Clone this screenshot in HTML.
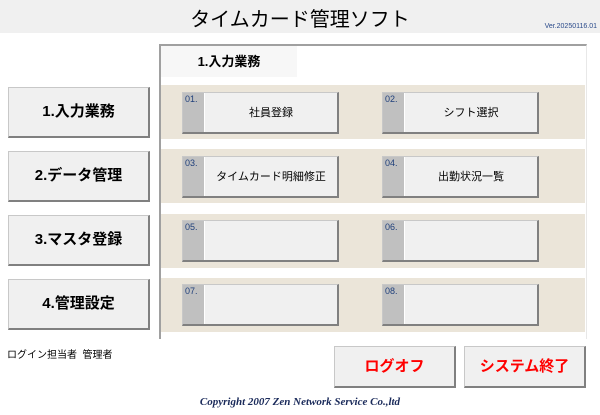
<!DOCTYPE html>
<html><head><meta charset="utf-8"><style>
*{margin:0;padding:0;box-sizing:border-box}
body{width:600px;height:415px;background:#fff;position:relative;overflow:hidden;font-family:"Liberation Sans","Noto Sans CJK JP",sans-serif}
.a{position:absolute}
.hdr{left:0;top:0;width:600px;height:33px;background:#f0f0f0}
.title{left:0;width:600px;top:3px;text-align:center;font-size:20px;color:#000}
.ver{right:3px;top:23px;font-size:7px;color:#2a4a8a}
.panel{left:159px;top:44px;width:428px;height:295px;border-left:2px solid #a0a0a0;border-top:2px solid #a0a0a0;border-right:1px solid #e8e8e8;background:#fff}
.tab{left:161px;top:46px;width:136px;height:31px;background:#f7f7f7;font-size:13px;font-weight:bold;text-align:center;line-height:31px}
.row{left:161px;width:424px;height:54px;background:#ebe5d9}
.btn{width:157px;height:42px;background:#f0f0f0;border:1px solid #c8c8c8;border-right:2px solid #808080;border-bottom:2px solid #808080}
.btn .g{position:absolute;left:0;top:0;width:22px;height:100%;background:#c0c0c0;border-right:1px solid #fff}
.btn .n{position:absolute;left:2px;top:1px;font-size:9px;color:#1f3f7a}
.btn .t{position:absolute;left:22px;right:0;top:0;bottom:0;text-align:center;line-height:40px;font-size:11px}
.lb{left:8px;width:142px;height:51px;background:#f0f0f0;border:1px solid #c8c8c8;border-right:2px solid #808080;border-bottom:2px solid #808080;font-size:15px;font-weight:bold;text-align:center;line-height:48px}
.bb{width:122px;height:42px;top:346px;background:#f0f0f0;border:1px solid #c8c8c8;border-right:2px solid #808080;border-bottom:2px solid #808080;color:#f00;font-size:15px;font-weight:bold;text-align:center;line-height:39px}
</style></head><body>
<div class="a hdr"></div>
<div class="a title">タイムカード管理ソフト</div>
<div class="a ver">Ver.20250116.01</div>
<div class="a panel"></div>
<div class="a tab">1.入力業務</div>
<div class="a row" style="top:85px"></div>
<div class="a row" style="top:149px"></div>
<div class="a row" style="top:214px"></div>
<div class="a row" style="top:278px"></div>

<div class="a btn" style="left:182px;top:92px"><div class="g"></div><div class="n">01.</div><div class="t">社員登録</div></div>
<div class="a btn" style="left:382px;top:92px"><div class="g"></div><div class="n">02.</div><div class="t">シフト選択</div></div>
<div class="a btn" style="left:182px;top:156px"><div class="g"></div><div class="n">03.</div><div class="t">タイムカード明細修正</div></div>
<div class="a btn" style="left:382px;top:156px"><div class="g"></div><div class="n">04.</div><div class="t">出勤状況一覧</div></div>
<div class="a btn" style="left:182px;top:220px"><div class="g"></div><div class="n">05.</div><div class="t"></div></div>
<div class="a btn" style="left:382px;top:220px"><div class="g"></div><div class="n">06.</div><div class="t"></div></div>
<div class="a btn" style="left:182px;top:284px"><div class="g"></div><div class="n">07.</div><div class="t"></div></div>
<div class="a btn" style="left:382px;top:284px"><div class="g"></div><div class="n">08.</div><div class="t"></div></div>

<div class="a lb" style="top:87px">1.入力業務</div>
<div class="a lb" style="top:151px">2.データ管理</div>
<div class="a lb" style="top:215px">3.マスタ登録</div>
<div class="a lb" style="top:279px">4.管理設定</div>

<div class="a" style="left:7px;top:346px;font-size:10px">ログイン担当者&nbsp;&nbsp;管理者</div>
<div class="a bb" style="left:334px">ログオフ</div>
<div class="a bb" style="left:464px">システム終了</div>
<div class="a" style="left:0;width:600px;top:396px;text-align:center;font-family:'Liberation Serif',serif;font-style:italic;font-weight:bold;font-size:11px;color:#1a2a5a">Copyright 2007 Zen Network Service Co.,ltd</div>
</body></html>
